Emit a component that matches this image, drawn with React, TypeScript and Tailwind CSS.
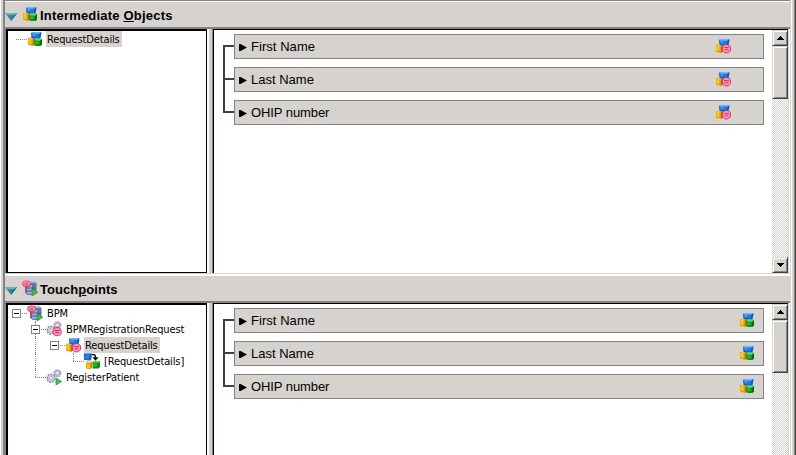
import React from 'react';

type IconName = 'blocks' | 'blocksBall' | 'server' | 'gearsBall' | 'gearsPlay' | 'mapped';

function Cubes() {
  return (
    <g>
      <path d="M1 7l2-1 5 1v6l-2 2-5-1.500z" fill="#e79a00" />
      <path d="M1 7l2-1 5 1-2 1z" fill="#ffe763" />
      <path d="M1.500 8h3v5l-3-.7z" fill="#ffcb18" />
      <path d="M6 8.500L8 7v6l-2 2z" fill="#b56d00" />
      <path d="M4 2l1.500-1h8.500l.5 1-1 5.500H6L4.500 7z" fill="#0859ce" />
      <path d="M4 2l1.500-1H14l-1.500 1.800H5.500z" fill="#6bb6ff" />
      <path d="M5 3h7v3.500H5.500z" fill="#1879ef" />
      <path d="M5.500 3h3v2h-3z" fill="#319aff" />
    </g>
  );
}

function Ball({ x, y }: { x: number; y: number }) {
  return (
    <g>
      <circle cx={x} cy={y} r="4.600" fill="#ef2845" />
      <circle cx={x} cy={y} r="3.700" fill="#ff9ac6" />
      <path d={`M${x - 2.5} ${y - 1.2}h5M${x - 2} ${y + 1}h4`} stroke="#e7184a" strokeWidth=".9" />
    </g>
  );
}

function Gears() {
  return (
    <g>
      <circle cx="11.300" cy="4.200" r="3.300" fill="#bdbed6" stroke="#9c9ebd" strokeWidth="1.500" strokeDasharray="1.800 .8" />
      <circle cx="5" cy="9.200" r="3.900" fill="#cecfe7" stroke="#9496b5" strokeWidth="1.700" strokeDasharray="2 .9" />
      <circle cx="11.300" cy="4.200" r="1.100" fill="#efeff7" />
      <circle cx="5" cy="9.200" r="1.500" fill="#fff" stroke="#8c8eb5" strokeWidth=".6" />
    </g>
  );
}

function Icon({ name }: { name: IconName }) {
  return (
    <svg width="16" height="16" viewBox="0 0 16 16" className="block shrink-0">
      {name === 'blocks' && (
        <g>
          <Cubes />
          <path d="M7.500 9.500l2-2.200 5.500.7v5.500L13 15H8.500l-1-1z" fill="#0a9218" />
          <path d="M7.500 9.500l2-2.200L15 8l-2 1.800z" fill="#63df52" />
          <path d="M8.300 10.500h3.200V13H8.300z" fill="#29be31" />
          <path d="M13 10l2-2v5.500L13 15z" fill="#006d08" />
        </g>
      )}
      {name === 'blocksBall' && (
        <g>
          <Cubes />
          <Ball x={11.5} y={10.8} />
        </g>
      )}
      {name === 'server' && (
        <g>
          <path d="M3 3l3-2h6l2.500 2v10l-3 2H6l-3-2z" fill="#6375a5" />
          <path d="M6 1h6l2 2H6z" fill="#a5bede" />
          <path d="M5 5h5v9H6l-1-1z" fill="#94b2de" />
          <path d="M4 8h10M4 11h8" stroke="#42558c" strokeWidth=".9" />
          <path d="M3 6l1 4 2.500-4z" fill="#ef2845" />
          <ellipse cx="4.500" cy="3.700" rx="4.300" ry="3.300" fill="#ef3055" />
          <ellipse cx="4.500" cy="3.600" rx="3.400" ry="2.400" fill="#ffa6c6" />
          <path d="M2.500 3h4M2.500 4.600h3.500" stroke="#e7184a" strokeWidth=".8" />
          <path d="M10 8.700l5.800 3.600L10 16z" fill="#42be42" stroke="#108a18" strokeWidth=".6" />
        </g>
      )}
      {name === 'gearsBall' && (
        <g>
          <Gears />
          <Ball x={11.2} y={10.7} />
        </g>
      )}
      {name === 'gearsPlay' && (
        <g>
          <Gears />
          <path d="M10 9l5.700 3.500L10 16z" fill="#4ac34a" stroke="#189a21" strokeWidth=".7" />
        </g>
      )}
      {name === 'mapped' && (
        <g>
          <path d="M0 1l1-1h6.500v6L6 7.500 0 7z" fill="#0055c6" />
          <path d="M0 1l1-1h6.500L6 1.500z" fill="#63b6ff" />
          <path d="M.5 2H5.500v4.500h-5z" fill="#1882f7" />
          <path d="M2 9.500L3 8.500h5v6L6.500 16 2 15.500z" fill="#d68e00" />
          <path d="M2 9.500l1-1h5l-1.500 1.500z" fill="#ffe763" />
          <path d="M2.500 10.500h3.500V15H2.500z" fill="#ffc310" />
          <path d="M8.500 9.500l1-1.200H16v5.700L14.500 15.500h-6z" fill="#088a18" />
          <path d="M8.500 9.500l1-1.200H16l-1.500 1.500z" fill="#63df52" />
          <path d="M9 10.500h4V14H9z" fill="#21b629" />
          <path d="M7.500 1.700h2c1.500 0 2 1 2 2.800" fill="none" stroke="#000" strokeWidth="1.300" />
          <path d="M8.500 4.200h6l-3 3.500z" fill="#000" />
        </g>
      )}
    </svg>
  );
}

function SectionHeader({ icon, children }: { icon: IconName; children: React.ReactNode }) {
  return (
    <header className="flex h-[27px] shrink-0 items-center border-b-2 border-[#848284] bg-[#d6d3ce]">
      <svg width="13" height="8" viewBox="0 0 13 8" className="mt-[5px] block">
        <path d="M0 0h12.300L6 8z" fill="#318a9c" />
        <path d="M0 0h12.300l-2 2H2z" fill="#6bb2bd" />
        <path d="M6 8l6.300-8-4.300 3z" fill="#215d73" />
      </svg>
      <span className="mb-px ml-1">
        <Icon name={icon} />
      </span>
      <h2 className="ml-0.5 mt-[3px] whitespace-nowrap text-[13px] font-bold leading-4">{children}</h2>
    </header>
  );
}

type GuideKind = 'none' | 'line' | 'tee' | 'end' | 'open' | 'lead';

function Guide({ kind }: { kind: GuideKind }) {
  return (
    <span className="relative block h-4 w-[19px] shrink-0">
      {(kind === 'line' || kind === 'tee') && (
        <span className="absolute left-2 top-0 h-4 border-l border-dotted border-[#848284]" />
      )}
      {kind === 'end' && <span className="absolute left-2 top-0 h-2 border-l border-dotted border-[#848284]" />}
      {kind !== 'none' && kind !== 'line' && (
        <span className="absolute left-2 top-2 w-[11px] border-t border-dotted border-[#848284]" />
      )}
      {(kind === 'open' || kind === 'tee') && (
        <span className="absolute left-1 top-1 flex h-[9px] w-[9px] items-center justify-center border border-[#848284] bg-white">
          <span className="h-px w-[5px] bg-black" />
        </span>
      )}
    </span>
  );
}

interface NodeProps {
  guides: GuideKind[];
  icon: IconName;
  label: string;
  selected?: boolean;
}

function TreeNode({ guides, icon, label, selected }: NodeProps) {
  return (
    <li className="flex h-4 items-center">
      {guides.map((g, i) => (
        <Guide key={i} kind={g} />
      ))}
      <Icon name={icon} />
      <span
        className={`ml-[3px] h-4 whitespace-nowrap pl-px pr-0.5 font-['DejaVu_Sans_Condensed','DejaVu_Sans',sans-serif] text-[11px] leading-[18px] tracking-[-0.13px] [font-stretch:condensed] ${selected ? 'bg-[#d6d3ce]' : ''}`}
      >
        {label}
      </span>
    </li>
  );
}

function ScrollButton({ up }: { up?: boolean }) {
  return (
    <div className="flex h-4 w-4 shrink-0 items-center justify-center border border-b-[#424142] border-l-[#d6d3ce] border-r-[#424142] border-t-[#d6d3ce] bg-[#d6d3ce] shadow-[inset_1px_1px_#fff,inset_-1px_-1px_#848284]">
      <svg width="7" height="4" viewBox="0 0 7 4" shapeRendering="crispEdges">
        <path d={up ? 'M3 0h1v1h1v1h1v1h1v1H0V3h1V2h1V1h1z' : 'M0 0h7v1H6v1H5v1H4v1H3V3H2V2H1V1H0z'} />
      </svg>
    </div>
  );
}

function ScrollBar() {
  return (
    <div className="flex w-4 shrink-0 flex-col bg-[repeating-conic-gradient(#d6d3ce_0_25%,#fff_0_50%)] bg-[length:2px_2px]">
      <ScrollButton up />
      <div className="h-[53px] border border-b-[#424142] border-l-[#d6d3ce] border-r-[#424142] border-t-[#d6d3ce] bg-[#d6d3ce] shadow-[inset_1px_1px_#fff,inset_-1px_-1px_#848284]" />
      <div className="flex-1" />
      <ScrollButton />
    </div>
  );
}

const FIELDS = [
  { name: 'First Name', tracking: 'tracking-[0.050px]' },
  { name: 'Last Name', tracking: 'tracking-[0px]' },
  { name: 'OHIP number', tracking: 'tracking-[-0.080px]' },
];

function FieldList({ icon, iconPad }: { icon: IconName; iconPad: string }) {
  return (
    <div className="flex min-w-0 flex-1 pl-[9px] pt-1">
      <div className="mt-[11px] flex h-[68px] w-[11px] flex-col justify-between border-l-2 border-[#424142]">
        <i className="h-0.5 bg-[#424142]" />
        <i className="h-0.5 bg-[#424142]" />
        <i className="h-0.5 bg-[#424142]" />
      </div>
      <div className="flex w-[530px] flex-col gap-2">
        {FIELDS.map((f) => (
          <div
            key={f.name}
            className={`flex h-[25px] items-center border border-[#848284] bg-[#d6d3ce] pl-1 ${iconPad}`}
          >
            <svg width="8" height="7" viewBox="0 0 8 7" className="mt-0.5">
              <path d="M0 0h1.500L8 3.500 1.500 7H0z" />
            </svg>
            <span className={`ml-1 whitespace-nowrap text-[13px] leading-4 ${f.tracking}`}>{f.name}</span>
            <span className="mb-px ml-auto">
              <Icon name={icon} />
            </span>
          </div>
        ))}
      </div>
    </div>
  );
}

function Panes({ tree, children }: { tree: React.ReactNode; children: React.ReactNode }) {
  return (
    <div className="flex h-[244px] shrink-0">
      <div className="w-px shrink-0 bg-[#848284]" />
      <ul className="w-[201px] shrink-0 border-b border-l-2 border-r border-t-2 border-black bg-white">{tree}</ul>
      <div className="w-0.5 shrink-0 bg-white" />
      <div className="w-[3px] shrink-0 bg-[#d6d3ce]" />
      <div className="w-px shrink-0 bg-[#848284]" />
      <div className="flex min-w-0 flex-1 border-l border-t border-black bg-white">
        {children}
        <ScrollBar />
      </div>
      <div className="w-px shrink-0 bg-[#d6d3ce]" />
      <div className="w-px shrink-0 bg-white" />
    </div>
  );
}

export default function App() {
  return (
    <div className="flex h-[455px] w-[796px] overflow-hidden bg-white font-['Liberation_Sans',Arial,sans-serif] text-black">
      <div className="w-[5px] shrink-0 border-l border-r-2 border-l-white border-r-[#848284] bg-[#d6d3ce]" />
      <main className="flex w-[785px] shrink-0 flex-col">
        <div className="h-0.5 shrink-0 border-t border-[#848284] bg-white" />
        <SectionHeader icon="blocks">
          <span className="tracking-[0.2px]">
            Intermediate <u>O</u>bjects
          </span>
        </SectionHeader>
        <Panes tree={<TreeNode guides={['lead']} icon="blocks" label="RequestDetails" selected />}>
          <FieldList icon="blocksBall" iconPad="pr-8" />
        </Panes>
        <div className="h-px shrink-0 bg-[#d6d3ce]" />
        <div className="h-0.5 shrink-0 bg-white" />
        <SectionHeader icon="server">
          <span className="tracking-[0.05px]">
            Touch<u>p</u>oints
          </span>
        </SectionHeader>
        <Panes
          tree={
            <>
              <TreeNode guides={['open']} icon="server" label="BPM" />
              <TreeNode guides={['none', 'tee']} icon="gearsBall" label="BPMRegistrationRequest" />
              <TreeNode guides={['none', 'line', 'open']} icon="blocksBall" label="RequestDetails" selected />
              <TreeNode guides={['none', 'line', 'none', 'end']} icon="mapped" label="[RequestDetails]" />
              <TreeNode guides={['none', 'end']} icon="gearsPlay" label="RegisterPatient" />
            </>
          }
        >
          <FieldList icon="blocks" iconPad="pr-2" />
        </Panes>
      </main>
      <div className="w-px shrink-0 bg-[#d6d3ce]" />
      <div className="w-px shrink-0 bg-white" />
      <div className="w-0.5 shrink-0 bg-[#d6d3ce]" />
      <div className="w-px shrink-0 bg-[#848284]" />
      <div className="w-px shrink-0 bg-[#424142]" />
    </div>
  );
}
